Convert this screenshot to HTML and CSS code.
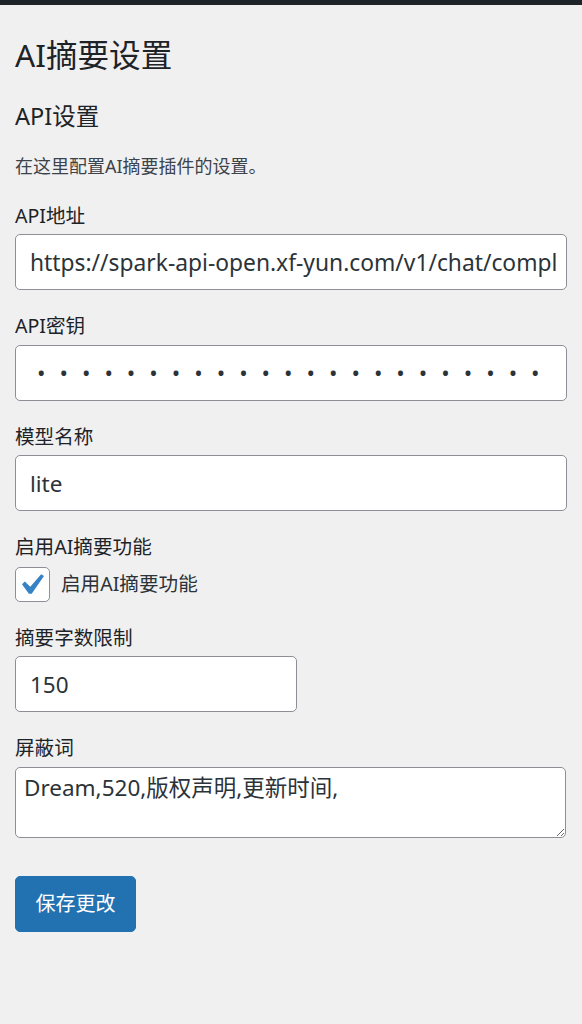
FILE: index.html
```html
<!DOCTYPE html>
<html lang="zh-CN">
<head>
<meta charset="utf-8">
<title>AI摘要设置</title>
<link rel="stylesheet" href="styles.css">
</head>
<body>
<div class="adminbar"></div>
<div class="wrap">
  <h1 class="page-title">AI摘要设置</h1>
  <form class="settings">
    <h2 class="section-title">API设置</h2>
    <p class="section-desc">在这里配置AI摘要插件的设置。</p>

    <div class="field">
      <label class="field-label" for="api_url">API地址</label>
      <input class="text-input full url" id="api_url" type="text" value="https://spark-api-open.xf-yun.com/v1/chat/completions">
    </div>

    <div class="field">
      <label class="field-label" for="api_key">API密钥</label>
      <input class="text-input full password" id="api_key" type="password" value="abcdefghijklmnopqrstuvwxyz0123">
    </div>

    <div class="field">
      <label class="field-label" for="model">模型名称</label>
      <input class="text-input full" id="model" type="text" value="lite">
    </div>

    <div class="field">
      <div class="field-label">启用AI摘要功能</div>
      <label class="check-row">
        <span class="checkbox">
          <svg class="checkmark" viewBox="5.78 4.89 10.39 9.32" width="22" height="20" aria-hidden="true"><path d="M14.83 4.89l1.34.94-5.81 8.38H9.02L5.78 9.67l1.34-1.25 2.57 2.4z"/></svg>
        </span>
        <span class="check-text">启用AI摘要功能</span>
      </label>
    </div>

    <div class="field">
      <label class="field-label" for="limit">摘要字数限制</label>
      <input class="text-input short" id="limit" type="number" value="150">
    </div>

    <div class="field">
      <label class="field-label" for="words">屏蔽词</label>
      <textarea class="textarea" id="words">Dream,520,版权声明,更新时间,</textarea>
    </div>

    <div class="submit">
      <button type="button" class="button-primary">保存更改</button>
    </div>
  </form>
</div>
</body>
</html>
```

FILE: styles.css
```css
html, body {
  margin: 0;
  padding: 0;
}
body {
  background: #f0f0f1;
  color: #1d2327;
  font-family: "Noto Sans", "Noto Sans CJK SC", sans-serif;
  width: 582px;
  min-height: 1024px;
}
.adminbar {
  height: 5px;
  background: #1d2327;
}
.wrap {
  padding: 0 15px;
}
.page-title {
  margin: 29px 0 0;
  font-size: 31.6px;
  line-height: 41.6px;
  font-weight: 400;
  color: #1d2327;
}
.settings {
  margin: 0;
}
.section-title {
  margin: 24.9px 0 0;
  font-size: 23.5px;
  line-height: 32.5px;
  font-weight: 400;
  color: #1d2327;
}
.section-desc {
  margin: 20px 0 0;
  font-size: 18px;
  line-height: 27px;
  color: #3c434a;
}
.field {
  margin-top: 22px;
}
.field-label {
  display: block;
  font-size: 19.6px;
  line-height: 28px;
  color: #1d2327;
  margin-bottom: 4.5px;
}
.text-input {
  display: block;
  box-sizing: border-box;
  height: 56px;
  margin: 0;
  padding: 0 12px 0 14px;
  border: 1px solid #8c8f94;
  border-radius: 5px;
  background: #fff;
  color: #2c3338;
  font-family: "Noto Sans", "Noto Sans CJK SC", sans-serif;
  font-size: 22.5px;
  outline: none;
}
.full {
  width: 552px;
}
.url {
  font-size: 22.8px;
  padding-right: 10px;
}
.short {
  width: 282px;
  -moz-appearance: textfield;
}
.short::-webkit-inner-spin-button,
.short::-webkit-outer-spin-button {
  -webkit-appearance: none;
  margin: 0;
}
.password {
  letter-spacing: 14px;
  text-indent: 7px;
}
.check-row {
  display: flex;
  align-items: center;
  gap: 11px;
  margin-top: 5.5px;
}
.checkbox {
  box-sizing: border-box;
  width: 35px;
  height: 35px;
  border: 1px solid #8c8f94;
  border-radius: 5px;
  background: #fff;
  display: flex;
  align-items: center;
  justify-content: center;
}
.checkmark {
  fill: #3582c4;
  display: block;
}
.check-text {
  font-size: 19.6px;
  line-height: 28px;
  color: #2c3338;
}
.textarea {
  display: block;
  box-sizing: border-box;
  width: 551px;
  height: 71px;
  margin: 0;
  padding: 3px 8px;
  border: 1px solid #8c8f94;
  border-radius: 5px;
  background: #fff;
  color: #2c3338;
  font-family: "Noto Sans", "Noto Sans CJK SC", sans-serif;
  font-size: 22.5px;
  line-height: 33px;
  resize: vertical;
  outline: none;
}
.submit {
  margin-top: 38px;
}
.button-primary {
  box-sizing: border-box;
  height: 56px;
  padding: 0 19.5px;
  margin: 0;
  border: 1px solid #2271b1;
  border-radius: 5px;
  background: #2271b1;
  color: #fff;
  font-family: "Noto Sans", "Noto Sans CJK SC", sans-serif;
  font-size: 20px;
  line-height: 28px;
  cursor: pointer;
}
```
